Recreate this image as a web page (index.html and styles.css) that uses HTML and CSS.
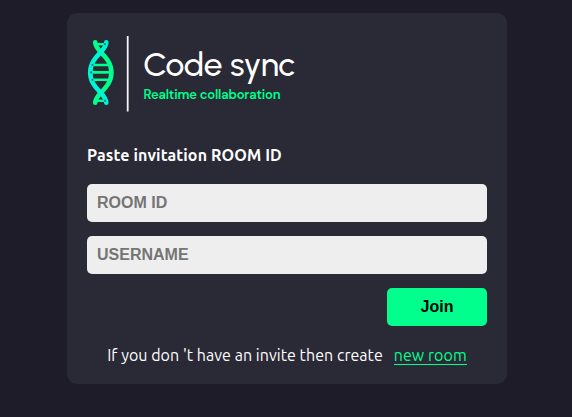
FILE: index.html
```html
<!DOCTYPE html>
<html lang="en">
<head>
<meta charset="utf-8">
<title>Code sync</title>
<link rel="stylesheet" href="styles.css">
</head>
<body>
<main class="card">
  <svg class="logo" viewBox="0 0 220 80" role="img" aria-label="Code sync">
    <g fill="none" stroke-linecap="round">
      <path stroke="#00ff8c" stroke-width="2.6" d="M10 11.2H18M6 32H21M4 39.400H23M6 46.800H21M10 67.800H18"/>
      <path stroke="#00ff8c" stroke-width="4.6" d="M8.200 9.300C8.200 19 24.400 23 24.400 39.500S8.200 60 8.200 69.700"/>
      <path stroke="#00f5d4" stroke-width="4.6" d="M19.300 9.300C19.300 19 3.200 23 3.200 39.500S19.300 60 19.300 69.700"/>
    </g>
    <g fill="#087f91"><circle cx="18" cy="11.200" r="1.1"/><circle cx="5.500" cy="32" r="1.1"/><circle cx="4.200" cy="39.400" r="1.1"/><circle cx="5.500" cy="46.800" r="1.1"/><circle cx="18" cy="67.800" r="1.1"/></g>
    <path stroke="#f4f4f6" stroke-width="1.8" d="M40.7 3V78.500"/>
    <text class="logo-name" x="56.300" y="43" textLength="152">Code sync</text>
    <text class="logo-tag" x="56.5" y="65.500" textLength="137">Realtime collaboration</text>
  </svg>
  <h1 class="title">Paste invitation ROOM ID</h1>
  <form class="form">
    <input class="field" type="text" placeholder="ROOM ID">
    <input class="field" type="text" placeholder="USERNAME">
    <button class="join" type="button">Join</button>
    <p class="info"><span>If you don 't have an invite then create</span><a class="link" href="#">new room</a></p>
  </form>
</main>
</body>
</html>
```
FILE: styles.css
```css
* { box-sizing: border-box; }
body {
  margin: 0;
  padding: 13px 65px 0 67px;
  min-height: 100vh;
  background: #1d1c28;
  color: #fff;
  font-family: Ubuntu, "Noto Sans", sans-serif;
}
.card {
  width: 440px;
  height: 371px;
  padding: 20px;
  border-radius: 10px;
  background: #2a2936;
}
.logo {
  display: block;
  width: 220px;
  height: 80px;
  overflow: visible;
}
.logo-name {
  fill: #fff;
  font: 500 33.5px Urbanist, Outfit, Lexend, Lato, sans-serif;
}
.logo-tag {
  fill: #00ff8c;
  font: 600 13px "DM Sans", Inter, sans-serif;
}
.title {
  margin: 30px 0 17px;
  font-size: 16px;
  font-weight: 700;
  line-height: 24px;
  letter-spacing: 0.13px;
}
.form {
  display: flex;
  flex-direction: column;
}
.field {
  height: 38px;
  margin-bottom: 14px;
  padding: 10px;
  border: 0;
  border-radius: 5px;
  background: #eee;
  color: #000;
  font: 700 16px "Liberation Sans", sans-serif;
}
.field::placeholder { color: #757575; }
.join {
  align-self: flex-end;
  width: 100px;
  height: 38px;
  padding: 0;
  border: 0;
  border-radius: 5px;
  background: #00ff8c;
  color: #000;
  font: 700 16px "Liberation Sans", sans-serif;
}
.info {
  display: flex;
  justify-content: center;
  align-items: flex-start;
  gap: 11px;
  margin: 20px 0 0;
  font-size: 16px;
  line-height: 18px;
  letter-spacing: 0.045px;
  white-space: nowrap;
}
.link {
  color: #00ff8c;
  text-decoration: none;
  border-bottom: 1px solid #00ff8c;
}
```
